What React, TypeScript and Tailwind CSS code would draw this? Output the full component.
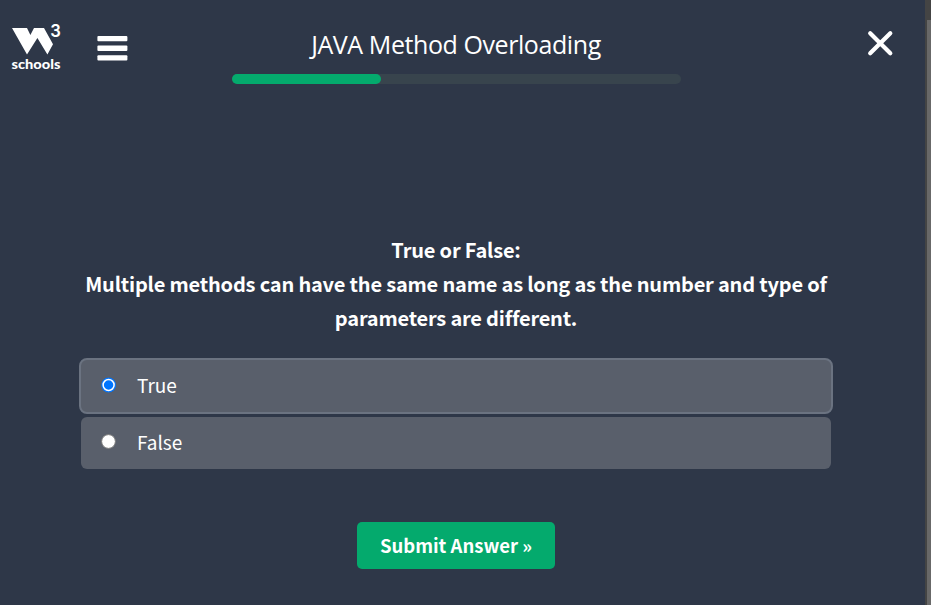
import { useState } from "react";

function Logo() {
  return (
    <svg width="56" height="50" viewBox="0 0 56 50" className="block overflow-visible" fill="#fff">
      <path d="M2 6H17L20.4 13L24 6H34L43 22.2L37.4 32.5L27.4 16L17 32.5Z" />
      <text x="40.2" y="14.8" fontSize="17.5" fontWeight="600" textLength="10.6" lengthAdjust="spacingAndGlyphs" fontFamily="Inter, sans-serif">3</text>
      <text x="1.5" y="47" fontSize="14" fontWeight="900" textLength="49" lengthAdjust="spacingAndGlyphs" fontFamily="Lato, sans-serif">schools</text>
    </svg>
  );
}

function MenuIcon() {
  return (
    <svg width="31" height="25" viewBox="0 0 31 25" fill="#fff">
      <rect x="0.4" width="30" height="5.3" rx="1" />
      <rect x="0.4" y="9.6" width="30" height="5.3" rx="1" />
      <rect x="0.4" y="19.2" width="30" height="5.3" rx="1" />
    </svg>
  );
}

function RadioMark({ checked }: { checked: boolean }) {
  return (
    <svg width="15" height="15" viewBox="0 0 15 15" className="mb-[3px] overflow-visible">
      {checked ? (
        <>
          <circle cx="7.6" cy="8" r="7.4" fill="#0075ff" />
          <circle cx="7.6" cy="8" r="5.5" fill="#0075ff" stroke="#fff" strokeWidth="1.5" />
        </>
      ) : (
        <circle cx="7.5" cy="7.5" r="6.9" fill="#fff" stroke="#767676" strokeWidth="1" />
      )}
    </svg>
  );
}

const answers = ["True", "False"];

export default function App() {
  const [chosen, setChosen] = useState("True");
  return (
    <div className="flex h-[605px] w-[931px] overflow-hidden bg-[#2e3748] font-['Noto_Sans_CJK_SC',sans-serif] text-white">
      <div className="flex w-[925px] flex-col">
        <header className="flex h-[84px] items-start">
          <div className="ml-[10px] mt-[22px]"><Logo /></div>
          <button className="ml-[31px] mt-[36px]" aria-label="Menu"><MenuIcon /></button>
          <div className="ml-[104px] flex w-[449px] flex-col pt-[26px]">
            <h1 className="h-12 whitespace-nowrap pr-px text-center font-['Open_Sans',sans-serif] text-[25px] leading-[36px] tracking-[-0.42px]">JAVA Method Overloading</h1>
            <div className="h-[10px] rounded-full bg-[#38444d]">
              <div className="h-full w-[149px] rounded-full bg-[#04aa6d]" />
            </div>
          </div>
          <button className="ml-[186px] mt-[30px]" aria-label="Close">
            <svg width="27" height="27" viewBox="0 0 27 27" stroke="#fff" strokeWidth="4.2" strokeLinecap="round" fill="none">
              <path d="M3.2 3.2L23.3 23.3M23.3 3.2L3.2 23.3" />
            </svg>
          </button>
        </header>
        <main className="ml-[79px] flex w-[754px] flex-col items-center pt-[149px]">
          <h2 className="whitespace-nowrap text-center text-[20px] font-bold leading-[34px] tracking-[-0.19px]">
            True or False:<br />Multiple methods can have the same name as long as the number and type of<br />parameters are different.
          </h2>
          <div className="mt-[23px] flex w-full flex-col">
            {answers.map((a) => (
              <label
                key={a}
                className={
                  a === chosen
                    ? "flex h-14 items-center rounded-[8px] border-2 border-[#6b7381] bg-[#595f6b] pl-5"
                    : "mx-[2px] mt-[3px] flex h-[52px] items-center rounded-[6px] bg-[#595f6b] pl-5"
                }
              >
                <input type="radio" name="answer" checked={a === chosen} onChange={() => setChosen(a)} className="sr-only" />
                <RadioMark checked={a === chosen} />
                <span className="mb-[2px] ml-[21px] text-[19px] leading-[28px]">{a}</span>
              </label>
            ))}
          </div>
          <button className="mt-[53px] h-[47px] w-[198px] rounded-[5px] bg-[#04aa6d] text-[18.5px] font-bold leading-[47px]">Submit Answer »</button>
        </main>
      </div>
      <aside className="h-full w-[6px] bg-[#444] pl-[2px] pt-5">
        <div className="h-full bg-[#686868]" />
      </aside>
    </div>
  );
}
